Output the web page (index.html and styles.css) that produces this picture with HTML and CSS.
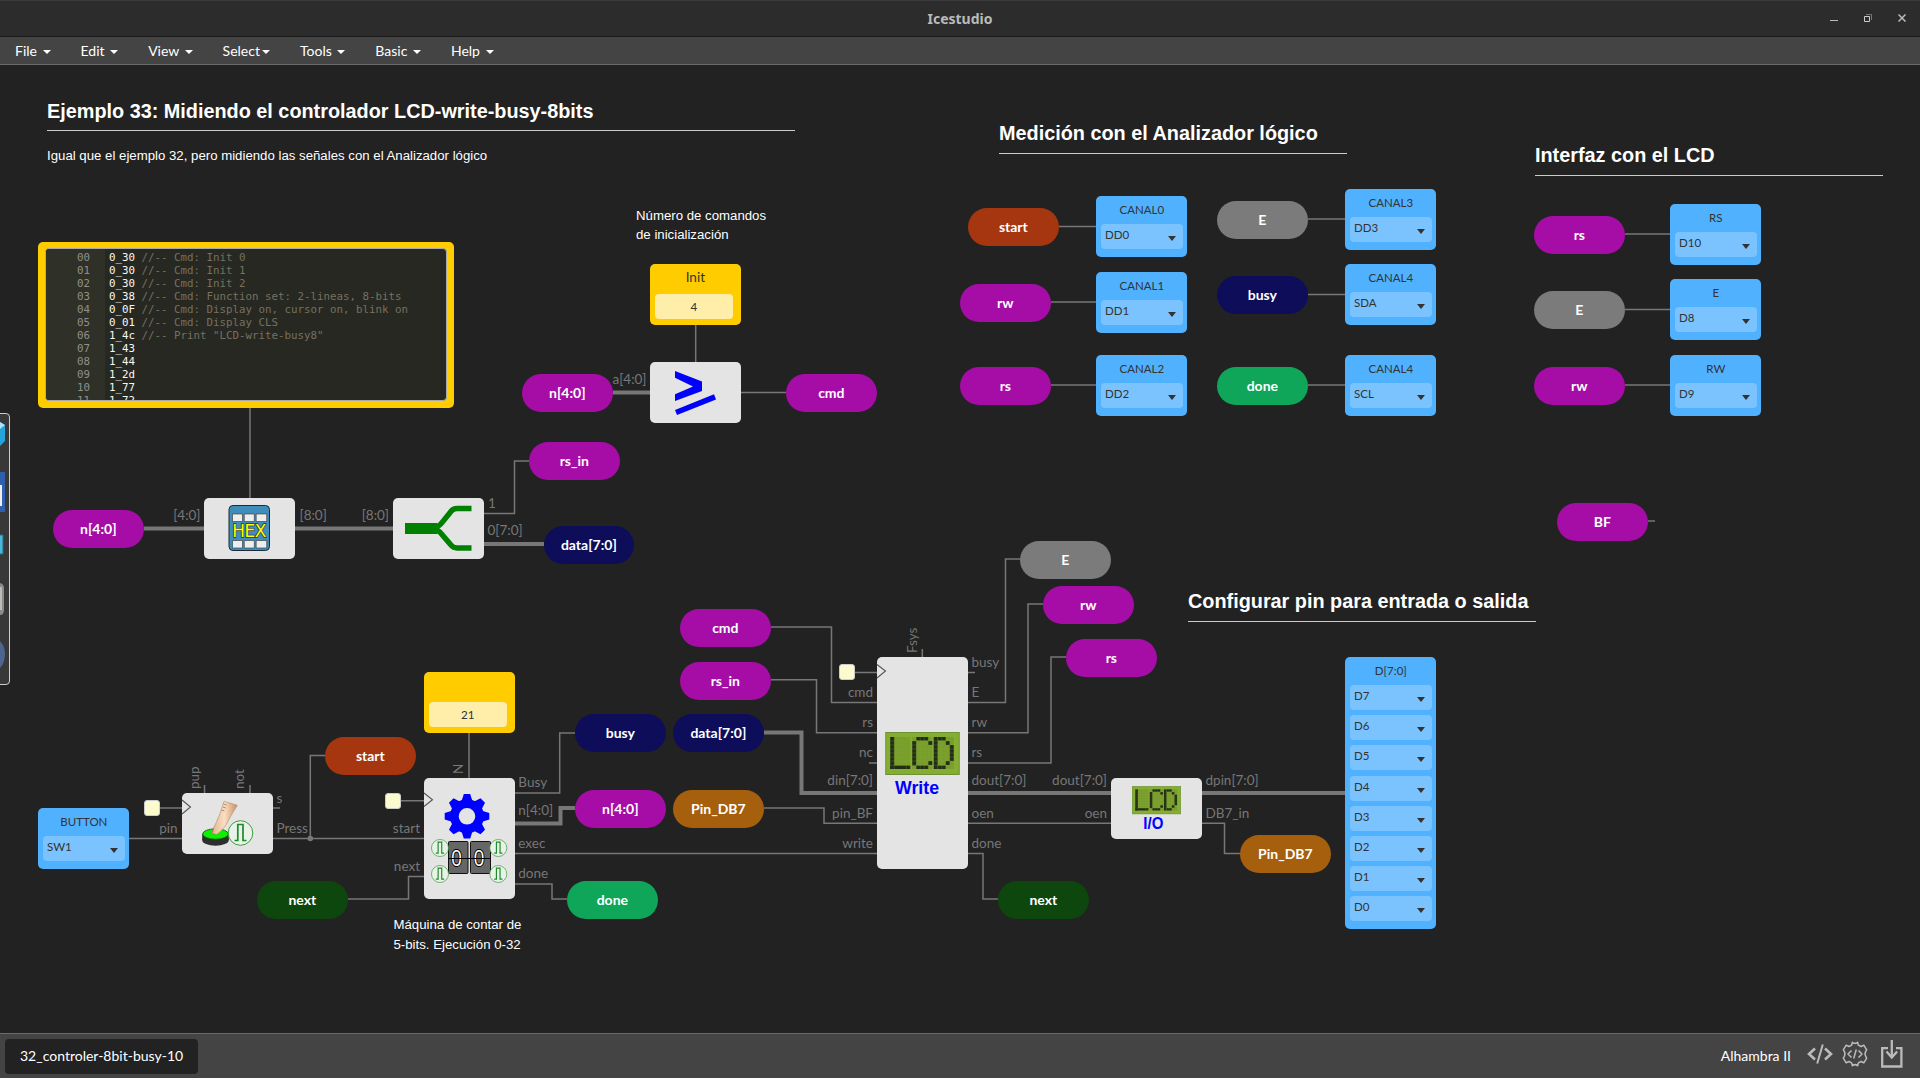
FILE: index.html
```html
<!DOCTYPE html>
<html lang="es">
<head>
<meta charset="utf-8">
<title>Icestudio</title>
<link rel="stylesheet" href="styles.css">
</head>
<body>
<header class="titlebar">
  <span class="app-name">Icestudio</span>
  <div class="window-buttons">
    <svg width="8" height="8" viewBox="0 0 8 8"><path d="M0 6.5H8" stroke="#bbb" fill="none"/></svg>
    <svg width="8" height="8" viewBox="0 0 8 8" fill="none"><path d="M2 .5H7.500V6" stroke="#777"/><path d="M.5 2.500H5.500V7.500H.5Z" stroke="#ccc"/></svg>
    <svg width="8" height="8" viewBox="0 0 8 8"><path d="M.5.5 7.500 7.500M7.500.5.5 7.500" stroke="#bbb" stroke-width="1.500"/></svg>
  </div>
</header>
<nav class="menu">
  <a>File&nbsp;<i class="caret"></i></a><a>Edit&nbsp;<i class="caret"></i></a><a>View&nbsp;<i class="caret"></i></a><a>Select<i class="caret"></i></a><a>Tools&nbsp;<i class="caret"></i></a><a>Basic&nbsp;<i class="caret"></i></a><a>Help&nbsp;<i class="caret"></i></a>
</nav>

<main class="canvas">
 <div class="sheet">
  <svg class="wires" width="1920" height="1033" viewBox="0 0 1920 1033">
    <g class="wire">
      <path d="M250 408V498M484 513.500H514.500V461H529M741 392.500H786M695.700 325V362"/>
      <path d="M1059 226.500H1096M1051 302H1096M1051 385H1096M1308 219H1345M1308 294.500H1345M1308 385H1345"/>
      <path d="M1625 234H1670M1625 309.500H1670M1625 385H1670M1648 521H1655"/>
      <path d="M129 838.500H182M159 808H182M204.500 785V793M250 785V793M273 808H280M273 838.500H424M310.300 838.500V755.500H325"/>
      <path d="M348 899H408.500V876.500H424M401 800.700H424M469 732V778M515 793H559.700V733H575M515 853.500H877M515 884H552V899H567"/>
      <path d="M771 627H831.500V702.500H877M771 679.700H816.500V732.700H877M869 763H877M764 808H824V823.300H877M855 672.500H877M922.300 649V657"/>
      <path d="M968 672.500H975M968 702.500H1005.500V559H1020M968 732.700H1028V604H1043M968 763H1051V657H1066M968 823.300H1111M968 853.500H983V899H998M1202 823.300H1224.500V853.500H1240"/>
    </g>
    <g class="bus">
      <path d="M144 528.500H204M295 528.500H393M484 544H544M613 392.500H650M515 823.500H560.500V808H575M764 732.500H801.500V793H877M968 793H1111M1202 793H1345"/>
    </g>
    <circle cx="310.300" cy="838.500" r="2.800" fill="#777"/>
    <g class="port">
      <text x="299.500" y="520">[8:0]</text><text x="488" y="508">1</text><text x="487.500" y="535">0[7:0]</text>
      <text x="276.500" y="803">s</text><text x="276.500" y="833">Press</text>
      <text x="518.300" y="787">Busy</text><text x="518.300" y="815">n[4:0]</text><text x="518.300" y="848">exec</text><text x="518.300" y="878">done</text>
      <text x="971.500" y="667">busy</text><text x="971.500" y="697">E</text><text x="971.500" y="727">rw</text><text x="971.500" y="757">rs</text><text x="971.500" y="785">dout[7:0]</text><text x="971.500" y="818">oen</text><text x="971.500" y="848">done</text>
      <text x="1205.500" y="785">dpin[7:0]</text><text x="1205.500" y="818">DB7_in</text>
      <text transform="translate(199 789) rotate(-90)">pup</text><text transform="translate(244 789) rotate(-90)">not</text><text transform="translate(462.500 774) rotate(-90)">N</text><text transform="translate(917 653) rotate(-90)">Fsys</text>
    </g>
    <g class="port port-in">
      <text x="200.500" y="520">[4:0]</text><text x="389" y="520">[8:0]</text><text x="646.500" y="384">a[4:0]</text>
      <text x="177.500" y="833">pin</text><text x="420" y="833">start</text><text x="420" y="871">next</text>
      <text x="873" y="697">cmd</text><text x="873" y="727">rs</text><text x="873" y="757">nc</text><text x="873" y="785">din[7:0]</text><text x="873" y="818">pin_BF</text><text x="873" y="848">write</text>
      <text x="1107" y="785">dout[7:0]</text><text x="1107" y="818">oen</text>
    </g>
  </svg>

  <section class="note" style="left:47px;top:98px;width:748px"><h2>Ejemplo 33: Midiendo el controlador LCD-write-busy-8bits</h2><p>Igual que el ejemplo 32, pero midiendo las señales con el Analizador lógico</p></section>
  <section class="note section-title" style="left:999px;top:120px;width:348px"><h2>Medición con el Analizador lógico</h2></section>
  <section class="note section-title" style="left:1535px;top:142px;width:348px"><h2>Interfaz con el LCD</h2></section>
  <section class="note section-title" style="left:1188px;top:588px;width:348px"><h2>Configurar pin para entrada o salida</h2></section>
  <section class="note small" style="left:636px;top:206px;line-height:19px">Número de comandos<br>de inicialización</section>
  <section class="note small" style="left:393.500px;top:915px;line-height:20px">Máquina de contar de<br>5-bits. Ejecución 0-32</section>

  <div class="memory" style="left:38px;top:242px">
    <div class="editor">
      <pre class="gutter">00
01
02
03
04
05
06
07
08
09
10
11</pre>
      <pre class="code">0_30 <em>//-- Cmd: Init 0</em>
0_30 <em>//-- Cmd: Init 1</em>
0_30 <em>//-- Cmd: Init 2</em>
0_38 <em>//-- Cmd: Function set: 2-lineas, 8-bits</em>
0_0F <em>//-- Cmd: Display on, cursor on, blink on</em>
0_01 <em>//-- Cmd: Display CLS</em>
1_4c <em>//-- Print "LCD-write-busy8"</em>
1_43
1_44
1_2d
1_77
1_72</pre>
    </div>
  </div>

  <div class="const" style="left:650px;top:264px"><b>Init</b><span>4</span></div>
  <div class="const" style="left:424px;top:672px"><b></b><span>21</span></div>

  <div class="pill purple" style="left:53px;top:510px">n[4:0]</div>
  <div class="pill purple" style="left:529px;top:442px">rs_in</div>
  <div class="pill navy" style="left:543.500px;top:526px">data[7:0]</div>
  <div class="pill purple" style="left:522px;top:374px">n[4:0]</div>
  <div class="pill purple" style="left:786px;top:374px">cmd</div>
  <div class="pill rust" style="left:968px;top:208px">start</div>
  <div class="pill purple" style="left:960px;top:284px">rw</div>
  <div class="pill purple" style="left:960px;top:367px">rs</div>
  <div class="pill gray" style="left:1217px;top:201px">E</div>
  <div class="pill navy" style="left:1217px;top:276px">busy</div>
  <div class="pill green" style="left:1217px;top:367px">done</div>
  <div class="pill purple" style="left:1534px;top:216px">rs</div>
  <div class="pill gray" style="left:1534px;top:291px">E</div>
  <div class="pill purple" style="left:1534px;top:367px">rw</div>
  <div class="pill purple" style="left:1557px;top:503px">BF</div>
  <div class="pill rust" style="left:325px;top:737px">start</div>
  <div class="pill forest" style="left:257px;top:881px">next</div>
  <div class="pill navy" style="left:575px;top:714px">busy</div>
  <div class="pill purple" style="left:575px;top:790px">n[4:0]</div>
  <div class="pill navy" style="left:673px;top:714px">data[7:0]</div>
  <div class="pill amber" style="left:673px;top:790px">Pin_DB7</div>
  <div class="pill green" style="left:567px;top:881px">done</div>
  <div class="pill purple" style="left:680px;top:662px">rs_in</div>
  <div class="pill purple" style="left:680px;top:609px">cmd</div>
  <div class="pill gray" style="left:1020px;top:541px">E</div>
  <div class="pill purple" style="left:1043px;top:586px">rw</div>
  <div class="pill purple" style="left:1066px;top:639px">rs</div>
  <div class="pill forest" style="left:998px;top:881px">next</div>
  <div class="pill amber" style="left:1240px;top:835px">Pin_DB7</div>

  <div class="io" style="left:1096px;top:196px"><b>CANAL0</b><span>DD0</span></div>
  <div class="io" style="left:1096px;top:272px"><b>CANAL1</b><span>DD1</span></div>
  <div class="io" style="left:1096px;top:355px"><b>CANAL2</b><span>DD2</span></div>
  <div class="io" style="left:1345px;top:189px"><b>CANAL3</b><span>DD3</span></div>
  <div class="io" style="left:1345px;top:264px"><b>CANAL4</b><span>SDA</span></div>
  <div class="io" style="left:1345px;top:355px"><b>CANAL4</b><span>SCL</span></div>
  <div class="io" style="left:1670px;top:204px"><b>RS</b><span>D10</span></div>
  <div class="io" style="left:1670px;top:279px"><b>E</b><span>D8</span></div>
  <div class="io" style="left:1670px;top:355px"><b>RW</b><span>D9</span></div>
  <div class="io" style="left:38px;top:808px"><b>BUTTON</b><span>SW1</span></div>
  <div class="io" style="left:1345px;top:657px"><b>D[7:0]</b><span>D7</span><span>D6</span><span>D5</span><span>D4</span><span>D3</span><span>D2</span><span>D1</span><span>D0</span></div>

  <div class="block" style="left:204px;top:498px"></div>
  <div class="block" style="left:393px;top:498px"></div>
  <div class="block" style="left:650px;top:362px"></div>
  <div class="block" style="left:182px;top:793px"></div>
  <div class="block" style="left:424px;top:778px;height:120.700px"></div>
  <div class="block" style="left:877px;top:657px;height:211.600px"></div>
  <div class="block" style="left:1111px;top:778px"></div>
  <div class="clock" style="left:143.500px;top:800px"></div>
  <div class="clock" style="left:385px;top:793px"></div>
  <div class="clock" style="left:838.500px;top:664px"></div>

  <svg class="wires" width="1920" height="1033" viewBox="0 0 1920 1033">
    <defs>
      <symbol id="pulse" viewBox="0 0 26 26" overflow="visible">
        <circle cx="13" cy="13" r="12.300" fill="#e9f2e9" stroke="#3c9c3c" stroke-width="1"/>
        <path d="M7 20.500H10.300V4.500H15.500V20.500H19" fill="none" stroke="#1f8a2a" stroke-width="1.700"/>
      </symbol>
      <symbol id="lcd" viewBox="0 0 74.500 43">
        <rect x=".5" y=".5" width="73.500" height="42" fill="#84ad31" stroke="#6d9235"/>
        <g fill="#7a9e2d"><rect x="5" y="5" width="20" height="32"/><rect x="27" y="5" width="20" height="32"/><rect x="48.500" y="5" width="20" height="32"/></g>
        <g fill="#222d18">
          <rect x="5" y="5" width="4" height="32"/><rect x="5" y="33.500" width="20" height="3.500"/>
          <rect x="31" y="5" width="12" height="3.500"/><rect x="27" y="9" width="4" height="24.500"/><rect x="43" y="9" width="4" height="4"/><rect x="43" y="29" width="4" height="4"/><rect x="31" y="33.500" width="12" height="3.500"/>
          <rect x="48.500" y="5" width="4" height="32"/><rect x="52.500" y="5" width="8" height="3.500"/><rect x="60.500" y="9" width="4" height="4"/><rect x="64.500" y="13" width="4" height="16"/><rect x="60.500" y="29" width="4" height="4"/><rect x="52.500" y="33.500" width="8" height="3.500"/>
        </g>
        <path d="M9 5V37M13 5V33M17 5V33M21 5V37M31 5V37M35 5V37M39 5V37M43 5V37M52.500 5V37M56.500 5V37M60.500 5V37M64.500 5V37M5 9H69M5 13H69M5 17H69M5 21H69M5 25H69M5 29H69M5 33.300H69" stroke="#84ad31" stroke-width=".4" opacity=".6"/>
      </symbol>
      <linearGradient id="skin"><stop offset="0" stop-color="#e3b48d"/><stop offset=".5" stop-color="#f9dfc2"/><stop offset="1" stop-color="#c98f64"/></linearGradient>
    </defs>

    <g fill="none" stroke="#555" stroke-width="1.100">
      <path d="M182 800 190.500 807 182 814M424 793 432.500 799.700 424 806.500M877 664.500 885.500 671 877 678"/>
    </g>

    <rect x="229" y="505.500" width="40.500" height="45" rx="4" fill="#3e8dba" stroke="#1b2a33"/>
    <g fill="#eee" stroke="#333" stroke-width=".6"><path d="M232.500 514h10v7.500h-10zM244.300 514h10v7.500h-10zM256.200 514h10.500v7.500h-10.500zM232.500 540.500h10v7.500h-10zM244.300 540.500h10v7.500h-10zM256.200 540.500h10.500v7.500h-10.500z"/></g>
    <text class="hex" x="249.300" y="537" text-anchor="middle" textLength="34">HEX</text>

    <path d="M405 523H437V534H405Z" fill="#008000"/>
    <path d="M432 528.500Q439 527 442 522.500L450.500 512Q453 508.500 457 508.500H471.500M432 528.500Q439 530 442 534.500L450.500 544.500Q453 548 457 548H471.500" fill="none" stroke="#008000" stroke-width="5.400"/>

    <path d="M675 371 702 381.500V391L675 401V394.300L693 386.500 675 377.700ZM675 410 714 394.300 716 399.500 677 415Z" fill="#00f"/>

    <ellipse cx="215.500" cy="840" rx="13.300" ry="5.700" fill="#2c2f2c"/><rect x="202.200" y="834" width="26.600" height="6" fill="#2c2f2c"/>
    <ellipse cx="215.500" cy="834" rx="12.800" ry="5.200" fill="#0df000" stroke="#174d17" stroke-width=".8"/>
    <path d="M224 801.300 237.300 805.300Q230 817 226 825Q221 832 216.500 834.500L211.700 833Q213 828 216 823Q221 812 224 801.300Z" fill="url(#skin)" stroke="#a97c59" stroke-width=".5"/>
    <path d="M223.500 804l3 1M222.800 807l3 1M221.500 810l3 1M212.500 832.500l1-4" stroke="#8c6244" stroke-width=".7"/>
    <use href="#pulse" x="227.500" y="820" width="26" height="26"/>

    <g transform="translate(467 816.300)" fill="#00f">
      <path fill-rule="evenodd" d="M-17 0a17 17 0 1 0 34 0a17 17 0 1 0-34 0M-8.300 0a8.300 8.300 0 1 1 16.600 0a8.300 8.300 0 1 1-16.600 0"/>
      <g id="teeth"><path id="tooth" d="M-5.500-15-3.200-22.300H3.200L5.500-15Z"/><use href="#tooth" transform="rotate(45)"/><use href="#tooth" transform="rotate(90)"/><use href="#tooth" transform="rotate(135)"/></g>
      <use href="#teeth" transform="rotate(180)"/>
    </g>
    <g fill="#666" stroke="#111"><rect x="448.500" y="841.500" width="19.500" height="32" rx="1"/><rect x="470.500" y="841.500" width="20" height="32" rx="1"/></g>
    <text class="digit" x="456.500" y="866" text-anchor="middle" textLength="11" lengthAdjust="spacingAndGlyphs">0</text><text class="digit" x="479" y="866" text-anchor="middle" textLength="11" lengthAdjust="spacingAndGlyphs">0</text>
    <path d="M448 858.500H491" stroke="#000" stroke-width="1.200"/>
    <use href="#pulse" x="431" y="839" width="18" height="18"/><use href="#pulse" x="431" y="865" width="18" height="18"/><use href="#pulse" x="489.300" y="839" width="18" height="18"/><use href="#pulse" x="489.300" y="865" width="18" height="18"/>

    <use href="#lcd" x="885" y="732" width="75" height="43"/>
    <text class="caption" x="917" y="794" font-size="18" text-anchor="middle" textLength="44" lengthAdjust="spacingAndGlyphs">Write</text>
    <use href="#lcd" x="1132" y="786" width="49" height="28.500"/>
    <text class="caption" x="1153.300" y="829" font-size="16" text-anchor="middle" textLength="20" lengthAdjust="spacingAndGlyphs">I/O</text>
  </svg>

  <aside class="dock">
    <svg width="9" height="270" viewBox="0 0 9 270">
      <path d="M0 8 5 11V27L0 32Z" fill="#27a3dc"/><path d="M0 8 5 11 0 15Z" fill="#a8e6f7"/>
      <path d="M0 58H5V98H0Z" fill="#2f5fae"/><path d="M0 71H2V92H0Z" fill="#eee"/>
      <path d="M0 121H3V140H0" fill="#4db6d6" stroke="#1b6f8c"/>
      <path d="M0 169Q4 170 4 174V196Q4 201 0 201Z" fill="#8c8c86"/><path d="M0 173H2V196H0Z" fill="#bbb"/>
      <path d="M0 227Q5 232 5 240Q5 249 0 254Z" fill="#4d648f"/>
    </svg>
  </aside>
 </div>
</main>

<footer class="statusbar">
  <div class="tab">32_controler-8bit-busy-10</div>
  <div class="tools">
    <span>Alhambra II</span>
    <svg width="26" height="20" viewBox="0 0 26 20" fill="none" stroke="#bbb" stroke-width="2.600"><path d="M8 4.500 2 10 8 15.500M18 4.500 24 10 18 15.500"/><path d="M15.800.5 10.200 19.500" stroke-width="2"/></svg>
    <svg width="26" height="26" viewBox="0 0 26 26" fill="none" stroke="#bbb" stroke-width="1.500" stroke-linejoin="round"><path d="M10.400 1.300Q13 3.500 15.600 1.300L16.400 4.200 19 5.500 21.800 4.200 24.700 8.800Q21.500 13 24.700 17.200L21.800 21.800 19 20.500 16.400 21.800 15.600 24.700Q13 22.500 10.400 24.700L9.600 21.800 7 20.500 4.200 21.800 1.300 17.200Q4.500 13 1.300 8.800L4.200 4.200 7 5.500 9.600 4.200Z"/><path d="M9.500 9.500 6 13 9.500 16.500M16.500 9.500 20 13 16.500 16.500M14.300 8.500 11.700 17.500"/></svg>
    <svg width="22" height="28" viewBox="0 0 22 28" fill="none" stroke="#bbb" stroke-width="2.300"><path d="M7 8.200H1.200V26.500H20.400V8.200H15M10.800 0V18"/><path d="M5.500 11.500 10.800 17.500 16.100 11.500"/></svg>
  </div>
</footer>
</body>
</html>
```
FILE: styles.css
```css
* { box-sizing: border-box; }
body {
  margin: 0; width: 1920px; height: 1078px; overflow: hidden;
  display: flex; flex-direction: column;
  background: #222; color: #fff;
  font-family: Lato, "Open Sans", sans-serif; font-size: 14px;
}

/* window frame */
.titlebar {
  position: relative; height: 37px; flex: none;
  display: flex; align-items: center; justify-content: center;
  background: #2c2c2c; border-top: 1px solid #3c3c3c; border-bottom: 1px solid #1c1c1c;
}
.app-name { font: bold 14px "Noto Sans", sans-serif; color: #bababa; }
.window-buttons { position: absolute; right: 14px; top: 13px; display: flex; gap: 26px; }
.window-buttons svg { display: block; }

.menu {
  height: 28px; flex: none; display: flex; align-items: center;
  background: #444; border-bottom: 1px solid #6a6a6a;
}
.menu a { padding: 0 15px; line-height: 27px; white-space: nowrap; }
.caret {
  display: inline-block; margin-left: 2px; vertical-align: middle;
  border: 4px solid transparent; border-top-color: #fff; border-bottom: 0;
}

/* design area: nodes keep window coordinates */
.canvas { position: relative; flex: 1; overflow: hidden; }
.sheet { position: absolute; left: 0; top: -65px; width: 1920px; height: 1033px; }
.sheet > * { position: absolute; }
.wires { left: 0; top: 0; }
.wire path { fill: none; stroke: #777; stroke-width: 1.5px; }
.bus path { fill: none; stroke: #777; stroke-width: 4px; }
.port text { fill: #777; font-size: 13.5px; }
.port-in text { text-anchor: end; }
.hex { font: 17px "DejaVu Sans", sans-serif; fill: #ff0; stroke: #333; stroke-width: 1.4px; paint-order: stroke; }
.digit { font: 22px "Open Sans", sans-serif; fill: #fff; stroke: #000; stroke-width: 2px; paint-order: stroke; }
.caption { font-family: "Liberation Sans", sans-serif; font-weight: bold; fill: #00f; }

.note { font-family: "Liberation Sans", Arial, sans-serif; font-size: 13.22px; line-height: 19.6px; white-space: nowrap; }
.note h2 { margin: 0; height: 33px; font-size: 19.84px; line-height: 26px; border-bottom: 1px solid #ccc; }
.section-title h2 { height: 34px; }
.note p { margin: 15px 0 0; }

.memory { width: 416px; height: 166px; padding: 6px 7px; background: #fc0; border-radius: 5px; }
.editor {
  width: 402px; height: 153px; display: flex; overflow: hidden;
  background: #272822; border: 1px solid #aaa; border-radius: 4px;
}
.editor pre { margin: 0; padding-top: 2px; font: 10.8px/13px "DejaVu Sans Mono", monospace; }
.gutter { width: 59px; padding-right: 15px; text-align: right; background: #2f3129; color: #8f908a; }
.code { padding-left: 4px; color: #f8f8f2; }
.code em { font-style: normal; color: #75715e; }

.const { width: 90.7px; height: 60.6px; padding: 5px 8px 6px 5px; background: #fc0; border-radius: 5px; color: #333; text-align: center; }
.const b { display: block; height: 25px; padding-left: 3px; line-height: 17px; font-weight: normal; font-size: 13.5px; }
.const span { display: block; height: 25px; line-height: 26px; font-size: 11.6px; background: #ffedaa; border-radius: 4px; }

.pill { width: 90.7px; height: 38px; border-radius: 19px; line-height: 38px; text-align: center; font-weight: bold; font-size: 14px; }
.purple { background: #a60ca6; }
.navy { background: #0d0d5a; }
.rust { background: #a6360f; }
.gray { background: #7b7b7b; }
.green { background: #0fa65a; }
.forest { background: #0d470d; }
.amber { background: #a6600d; }

.io { width: 90.7px; min-height: 60.6px; padding: 5px 4px 8px 5px; background: #50b1ff; border-radius: 5px; color: #333; font-size: 11.5px; display: flex; flex-direction: column; gap: 5.2px; }
.io b { height: 18px; line-height: 17px; margin-bottom: -.2px; font-weight: normal; text-align: center; }
.io span { display: flex; justify-content: space-between; height: 25px; padding: 0 7px 0 4px; line-height: 22px; background: #7ac3ff; border-radius: 4px; }
.io span::after { content: ""; margin-top: 12px; align-self: flex-start; border: 4px solid transparent; border-top: 5px solid #333; border-bottom: 0; }

.block { width: 90.7px; height: 60.6px; background: #e4e4e4; border-radius: 5px; }
.clock { width: 16px; height: 16px; background: #fcfbcd; border: 1px solid #ccc; border-radius: 3px; }

.dock { left: -1px; top: 413px; width: 11px; height: 272px; background: #383838; border: 1px solid #ccc; border-radius: 0 4px 4px 0; }
.dock svg { display: block; }

.statusbar {
  height: 45px; flex: none; display: flex; align-items: center; justify-content: space-between;
  padding: 0 17px 0 5px; background: #444; border-top: 1px solid #6a6a6a;
}
.tab { width: 193px; height: 35px; line-height: 33px; padding-left: 15px; background: #222; border-radius: 4px; white-space: nowrap; }
.tools { display: flex; align-items: center; }
.tools span { margin-right: 16px; line-height: 20px; }
.tools svg { display: block; margin-top: -4px; }
.tools svg + svg { margin-left: 9px; }
.tools svg:last-child { margin-left: 13px; }
```
